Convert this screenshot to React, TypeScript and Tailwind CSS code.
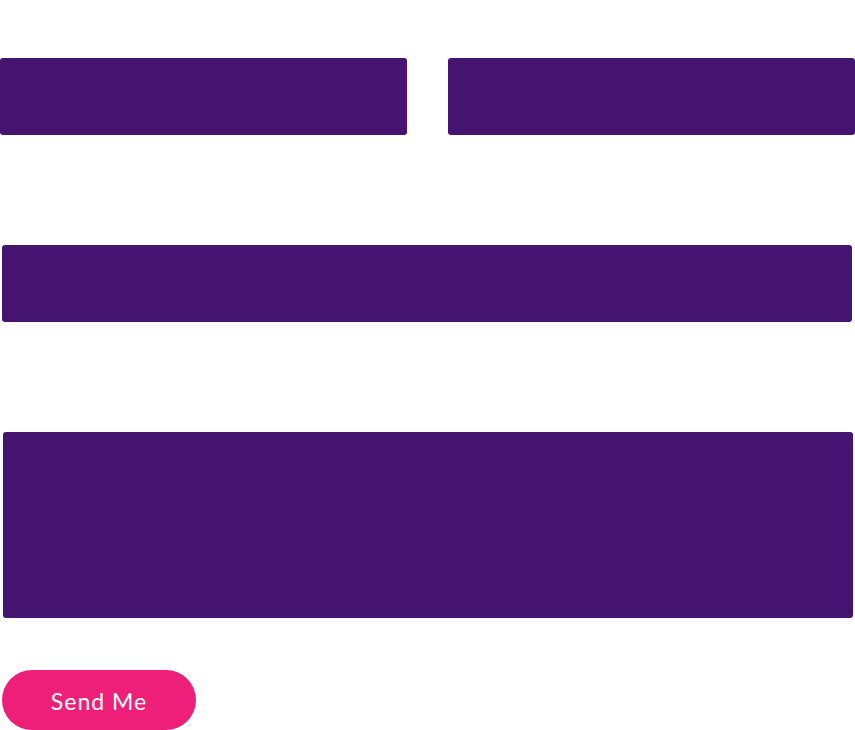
export default function App() {
  return (
    <div className="min-h-screen bg-white pt-[58px]" style={{ fontFamily: "Lato, 'Open Sans', sans-serif" }}>
      <form className="flex flex-col" onSubmit={(e) => e.preventDefault()}>
        {/* Name + email */}
        <div className="flex justify-between">
          <input className="h-[77px] w-[407px] rounded-[3px] bg-[#451471] outline-none" />
          <input className="h-[77px] w-[407px] rounded-[3px] bg-[#451471] outline-none" />
        </div>

        {/* Subject */}
        <input className="mt-[110px] ml-[2px] h-[77px] w-[850px] rounded-[3px] bg-[#451471] outline-none" />

        {/* Message */}
        <textarea className="mt-[110px] ml-[3px] h-[186px] w-[850px] resize-none rounded-[3px] bg-[#451471] outline-none" />

        <button
          type="submit"
          className="mt-[52px] ml-[2px] h-[60px] w-[194px] rounded-full bg-[#ed1f79] pt-[3px] text-[23px] tracking-[1px] text-white"
        >
          Send Me
        </button>
      </form>
    </div>
  );
}
